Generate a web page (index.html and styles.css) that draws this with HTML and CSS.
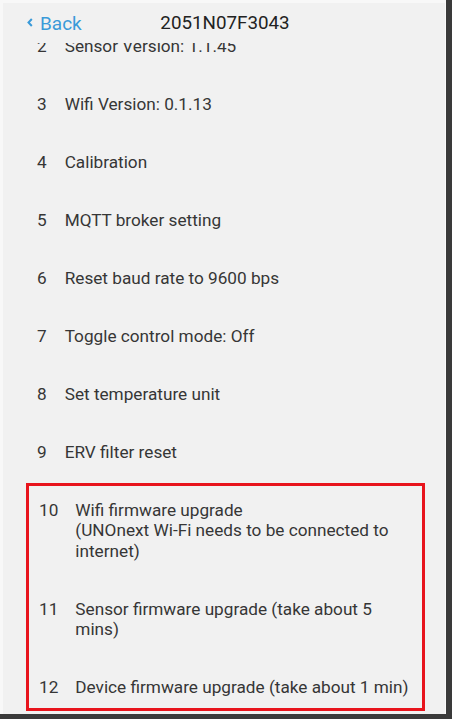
FILE: index.html
```html
<!DOCTYPE html>
<html>
<head>
<meta charset="utf-8">
<link rel="stylesheet" href="styles.css">
</head>
<body>
<div class="screen">
  <header class="header">
    <div class="back">
      <svg class="chev" width="6" height="9" viewBox="0 0 6 9"><path d="M4.8 1 L1.5 4.5 L4.8 8" fill="none" stroke="#3a9ad9" stroke-width="2"/></svg>
      <span class="back-label">Back</span>
    </div>
    <div class="title">2051N07F3043</div>
    <div class="spacer"></div>
  </header>
  <div class="viewport">
    <div class="list">
      <div class="item"><span class="num">2</span><span class="text">Sensor Version: 1.1.45</span></div>
      <div class="item"><span class="num">3</span><span class="text">Wifi Version: 0.1.13</span></div>
      <div class="item"><span class="num">4</span><span class="text">Calibration</span></div>
      <div class="item"><span class="num">5</span><span class="text">MQTT broker setting</span></div>
      <div class="item"><span class="num">6</span><span class="text">Reset baud rate to 9600 bps</span></div>
      <div class="item"><span class="num">7</span><span class="text">Toggle control mode: Off</span></div>
      <div class="item"><span class="num">8</span><span class="text">Set temperature unit</span></div>
      <div class="item"><span class="num">9</span><span class="text">ERV filter reset</span></div>
      <div class="group">
        <div class="item"><span class="num">10</span><span class="text">Wifi firmware upgrade<br>(UNOnext Wi-Fi needs to be connected to internet)</span></div>
        <div class="item"><span class="num">11</span><span class="text">Sensor firmware upgrade (take about 5 mins)</span></div>
        <div class="item"><span class="num">12</span><span class="text">Device firmware upgrade (take about 1 min)</span></div>
      </div>
    </div>
  </div>
</div>
</body>
</html>
```
FILE: styles.css
```css
html, body {
  margin: 0;
  padding: 0;
}
body {
  background: #3a3a3a;
  width: 452px;
  height: 719px;
  overflow: hidden;
  font-family: Roboto, "Noto Sans", "Liberation Sans", sans-serif;
}
.screen {
  box-sizing: border-box;
  width: 446px;
  height: 714px;
  background: #f1f1f1;
  border-top: 3px solid #f8f8f8;
  border-left: 3px solid #f8f8f8;
  border-right: 1px solid #fafafa;
  display: flex;
  flex-direction: column;
}
.header {
  height: 40px;
  flex: none;
  display: grid;
  grid-template-columns: 1fr auto 1fr;
  align-items: center;
}
.back {
  display: flex;
  align-items: center;
  gap: 7px;
  padding-left: 24px;
}
.chev {
  display: block;
  margin-top: -2px;
}
.back-label {
  color: #3a9ad9;
  font-size: 19px;
}
.title {
  color: #222;
  font-size: 18.8px;
  padding-left: 2px;
}
.viewport {
  flex: 1;
  overflow: hidden;
}
.list {
  margin-top: -26px;
  color: #363636;
  font-size: 17.2px;
  line-height: 20.5px;
}
.item {
  display: flex;
  gap: 18px;
  padding: 18.75px 20px 18.75px 34px;
}
.num {
  flex: none;
}
.group {
  margin: 2px 20px 0 23px;
  border: 3px solid #e8141c;
}
.group .item {
  padding: 18.75px 10px 18.75px 10px;
  gap: 17px;
}
.group .item:first-child {
  padding-top: 13.75px;
}
.group .item:last-child {
  padding-bottom: 10.5px;
}
```
